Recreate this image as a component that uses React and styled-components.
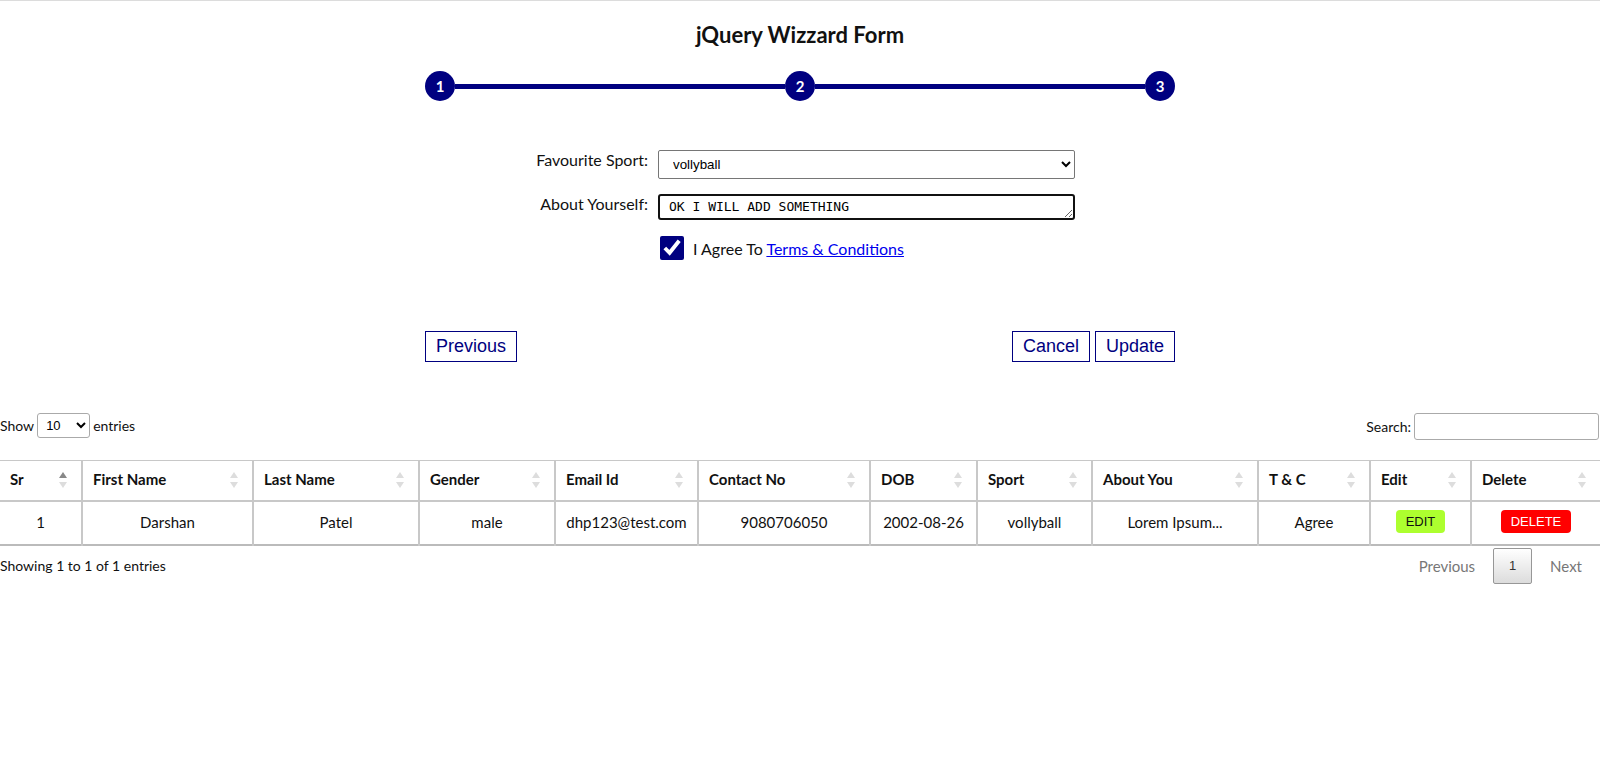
import React from "react";
import styled, { createGlobalStyle } from "styled-components";

const GlobalStyle = createGlobalStyle`
  html, body {
    margin: 0;
    padding: 0;
    background: #fff;
  }
  body {
    font-family: "Liberation Sans Narrow", Lato, "Noto Sans", sans-serif;
    color: #111;
  }
`;

const NAVY = "#000080";

const Page = styled.div`
  border-top: 1px solid #dcdcdc;
  width: 1600px;
`;

const Title = styled.h2`
  margin: 20px 0 0;
  font-family: Lato, sans-serif;
  font-size: 22px;
  line-height: 28px;
  font-weight: 700;
  text-align: center;
  color: #111;
`;

const Wizard = styled.div`
  width: 750px;
  margin: 0 auto;
`;

const Stepper = styled.div`
  margin-top: 22px;
  display: flex;
  align-items: center;
  height: 30px;
`;

const StepDot = styled.div`
  width: 30px;
  height: 30px;
  border-radius: 50%;
  background: ${NAVY};
  color: #fff;
  font-family: Lato, sans-serif;
  font-weight: 700;
  font-size: 15px;
  display: flex;
  align-items: center;
  justify-content: center;
  flex: none;
`;

const StepLine = styled.div`
  flex: 1;
  height: 5px;
  background: ${NAVY};
`;

const FormGrid = styled.div`
  margin-top: 49px;
  display: grid;
  grid-template-columns: 223px 417px;
  column-gap: 10px;
  row-gap: 15px;
`;

const Label = styled.label`
  font-family: Lato, sans-serif;
  font-size: 16px;
  line-height: 20px;
  text-align: right;
  padding-top: ${(p) => p.$pt || 0}px;
  color: #111;
`;

const Select = styled.select`
  height: 29px;
  width: 100%;
  border: 1px solid #767676;
  border-radius: 2px;
  padding: 0 8px 0 10px;
  font-family: "Liberation Sans", Arial, sans-serif;
  font-size: 13.33px;
  background: #fff;
  color: #000;
`;

const TextArea = styled.textarea`
  height: 26px;
  width: 100%;
  box-sizing: border-box;
  border: 2px solid #111;
  border-radius: 3px;
  padding: 3px 9px;
  font-family: "DejaVu Sans Mono", "Liberation Mono", monospace;
  font-size: 13px;
  line-height: 16px;
  resize: vertical;
  outline: none;
  color: #000;
`;

const AgreeRow = styled.div`
  grid-column: 2;
  display: flex;
  align-items: center;
  gap: 9px;
  margin-top: 1px;
  font-family: Lato, sans-serif;
  font-size: 16px;
`;

const Check = styled.input`
  width: 24px;
  height: 24px;
  margin: 0 0 0 2px;
  accent-color: ${NAVY};
`;

const TermsLink = styled.a`
  color: #0000ee;
  text-decoration: underline;
`;

const ButtonRow = styled.div`
  margin-top: 71px;
  display: flex;
  justify-content: space-between;
  align-items: center;
`;

const ButtonGroup = styled.div`
  display: flex;
  gap: 5px;
`;

const WizButton = styled.button`
  height: 31px;
  padding: 0 10px;
  border: 1px solid ${NAVY};
  background: #fff;
  color: ${NAVY};
  font-family: "Liberation Sans", Arial, sans-serif;
  font-size: 18px;
  cursor: pointer;
`;

const Controls = styled.div`
  margin-top: 51px;
  display: flex;
  justify-content: space-between;
  align-items: center;
  font-family: Lato, sans-serif;
  font-size: 14px;
  height: 27px;
`;

const LengthBox = styled.label`
  display: flex;
  align-items: center;
  gap: 3px;
  margin-top: -2px;
`;

const SmallSelect = styled.select`
  width: 53px;
  height: 25px;
  border: 1px solid #aaa;
  border-radius: 3px;
  padding: 0 4px;
  font-family: "Liberation Sans", Arial, sans-serif;
  font-size: 13px;
  background: #fff;
`;

const SearchBox = styled.label`
  display: flex;
  align-items: center;
  gap: 3px;
`;

const SearchInput = styled.input`
  width: 185px;
  height: 27px;
  box-sizing: border-box;
  border: 1px solid #aaa;
  border-radius: 3px;
  margin-right: 1px;
`;

const Table = styled.table`
  margin-top: 20px;
  width: 1600px;
  border-collapse: collapse;
  table-layout: fixed;
  font-family: Lato, sans-serif;
  font-size: 15px;
  color: #111;
  border-bottom: 2px solid #bbb;
`;

const Th = styled.th`
  position: relative;
  height: 40px;
  box-sizing: border-box;
  border: 2px solid #c8c8c8;
  border-top-width: 1px;
  border-bottom-width: 2px;
  padding: 0 10px 2px;
  text-align: left;
  font-weight: 700;
  width: ${(p) => p.$w}px;

  &:first-child { border-left: none; }
  &:last-child { border-right: none; }

  &::before,
  &::after {
    content: "";
    position: absolute;
    right: 14px;
    border-left: 4px solid transparent;
    border-right: 4px solid transparent;
  }
  &::before {
    top: 11px;
    border-bottom: 6px solid ${(p) => (p.$active ? "#888" : "#ddd")};
  }
  &::after {
    top: 21px;
    border-top: 6px solid #ddd;
  }
`;

const Td = styled.td`
  height: 40px;
  border: 2px solid #c8c8c8;
  border-top: none;
  border-bottom: none;
  text-align: center;
  padding: 0 10px 2px;
  white-space: nowrap;

  &:first-child { border-left: none; }
  &:last-child { border-right: none; }
`;

const ActionButton = styled.button`
  border: none;
  border-radius: 4px;
  height: 23px;
  padding: 0 10px;
  background: ${(p) => (p.$danger ? "#ff0000" : "#adff2f")};
  color: ${(p) => (p.$danger ? "#fff" : "#111")};
  font-family: "Liberation Sans", Arial, sans-serif;
  font-size: 13px;
  cursor: pointer;
`;

const Footer = styled.div`
  display: flex;
  justify-content: space-between;
  align-items: center;
  margin-top: 2px;
  font-family: Lato, sans-serif;
  font-size: 14px;
`;

const Pager = styled.div`
  display: flex;
  align-items: center;
  margin-right: 0;
`;

const PageLink = styled.span`
  color: #777;
  padding: 0 18px;
  font-size: 15px;
`;

const PageCurrent = styled.span`
  width: 39px;
  height: 36px;
  box-sizing: border-box;
  display: flex;
  align-items: center;
  justify-content: center;
  border: 1px solid #979797;
  border-radius: 2px;
  background: linear-gradient(to bottom, #fff 0%, #dcdcdc 100%);
  font-family: "Liberation Sans", Arial, sans-serif;
  font-size: 13px;
  color: #333;
`;

const columns = [
  ["Sr", 82],
  ["First Name", 171],
  ["Last Name", 166],
  ["Gender", 136],
  ["Email Id", 143],
  ["Contact No", 172],
  ["DOB", 107],
  ["Sport", 115],
  ["About You", 166],
  ["T & C", 112],
  ["Edit", 101],
  ["Delete", 129],
];

const row = ["1", "Darshan", "Patel", "male", "dhp123@test.com", "9080706050", "2002-08-26", "vollyball", "Lorem Ipsum...", "Agree"];

export default function App() {
  return (
    <Page>
      <GlobalStyle />
      <Title>jQuery Wizzard Form</Title>
      <Wizard>
        <Stepper>
          <StepDot>1</StepDot>
          <StepLine />
          <StepDot>2</StepDot>
          <StepLine />
          <StepDot>3</StepDot>
        </Stepper>

        <FormGrid>
          <Label $pt={0}>Favourite Sport:</Label>
          <Select defaultValue="vollyball">
            <option value="cricket">cricket</option>
            <option value="football">football</option>
            <option value="vollyball">vollyball</option>
          </Select>
          <Label $pt={0}>About Yourself:</Label>
          <TextArea defaultValue="OK I WILL ADD SOMETHING" />
          <AgreeRow>
            <Check type="checkbox" defaultChecked />
            <span>
              I Agree To <TermsLink href="#">Terms &amp; Conditions</TermsLink>
            </span>
          </AgreeRow>
        </FormGrid>

        <ButtonRow>
          <WizButton>Previous</WizButton>
          <ButtonGroup>
            <WizButton>Cancel</WizButton>
            <WizButton>Update</WizButton>
          </ButtonGroup>
        </ButtonRow>
      </Wizard>

      <Controls>
        <LengthBox>
          Show
          <SmallSelect defaultValue="10">
            <option>10</option>
            <option>25</option>
            <option>50</option>
          </SmallSelect>
          entries
        </LengthBox>
        <SearchBox>
          Search:
          <SearchInput type="search" />
        </SearchBox>
      </Controls>

      <Table>
        <thead>
          <tr>
            {columns.map(([name, w], i) => (
              <Th key={name} $w={w} $active={i === 0}>
                {name}
              </Th>
            ))}
          </tr>
        </thead>
        <tbody>
          <tr>
            {row.map((v, i) => (
              <Td key={i}>{v}</Td>
            ))}
            <Td>
              <ActionButton>EDIT</ActionButton>
            </Td>
            <Td>
              <ActionButton $danger>DELETE</ActionButton>
            </Td>
          </tr>
        </tbody>
      </Table>

      <Footer>
        <span>Showing 1 to 1 of 1 entries</span>
        <Pager>
          <PageLink>Previous</PageLink>
          <PageCurrent>1</PageCurrent>
          <PageLink>Next</PageLink>
        </Pager>
      </Footer>
    </Page>
  );
}
